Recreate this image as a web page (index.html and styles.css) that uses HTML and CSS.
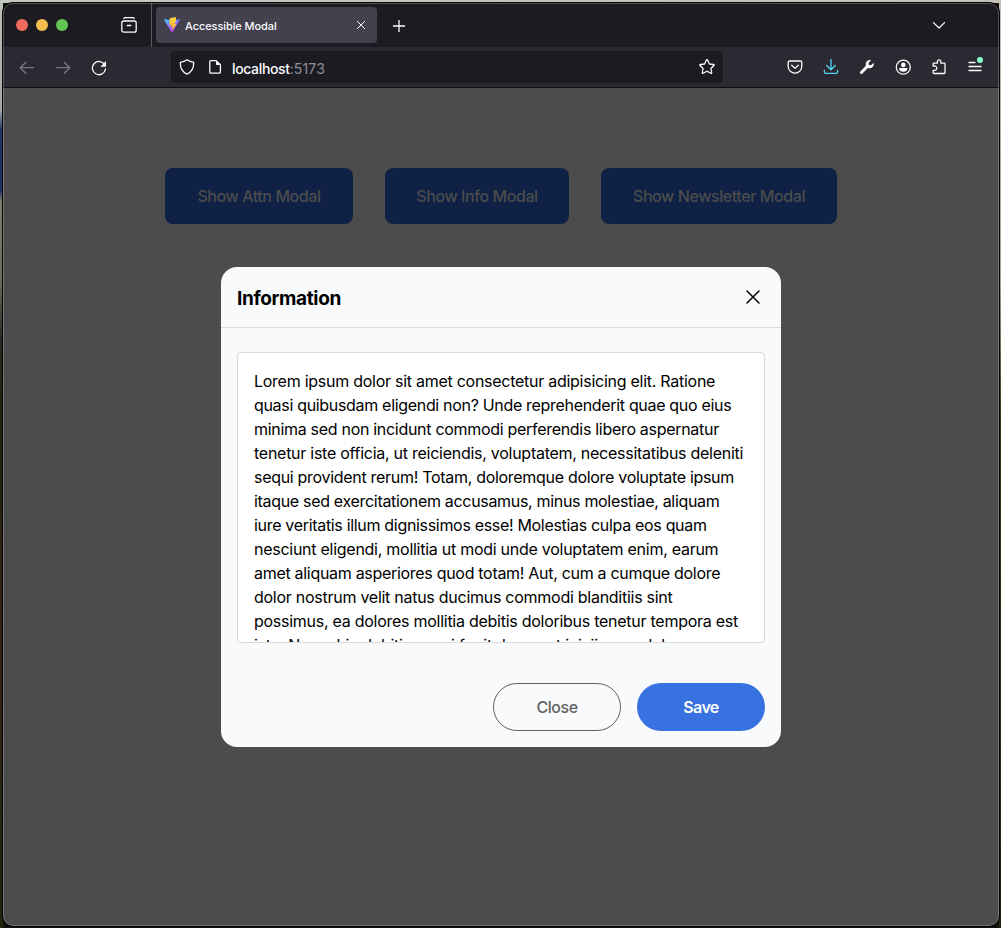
FILE: index.html
```html
<!DOCTYPE html>
<html lang="en">
<head>
<meta charset="utf-8">
<title>Accessible Modal</title>
<link rel="stylesheet" href="styles.css">
</head>
<body>
<div class="window">
  <header class="tabbar">
    <div class="lights"><i class="light red"></i><i class="light yellow"></i><i class="light green"></i></div>
    <svg class="icon view-icon" viewBox="0 0 16 16"><path d="M2.8 1.4Q3.2.7 4.2.7h7.6q1 0 1.4.7"/><rect x=".8" y="4" width="14.4" height="11.2" rx="2"/><path d="M6.2 8.5h3.6"/></svg>
    <div class="tab">
      <svg class="vite" viewBox="0 0 16 16"><defs><linearGradient id="v" x1="0" y1="0" x2=".6" y2="1"><stop stop-color="#41d1ff"/><stop offset=".9" stop-color="#bd34fe"/></linearGradient><linearGradient id="b" x1="0" y1="0" x2="0" y2="1"><stop stop-color="#ffd84a"/><stop offset="1" stop-color="#ffa51f"/></linearGradient></defs><path fill="url(#v)" d="M.5 2.2 8 3.4l7.6-1.2q.5 0 .2.5L8.4 15.5q-.4.5-.8 0L.1 2.7q-.3-.5.4-.5z"/><path fill="url(#b)" d="M11.8 0 5.800 1.200l-.6 6.700 2.400-.5-.5 3 1.700-.4-.8 4.200 4.600-7.400-2.200.3 1.600-3z"/></svg>
      <span class="tab-title">Accessible Modal</span>
      <svg class="icon tab-close" viewBox="0 0 8 8"><path d="m.4.4 7.2 7.2m0-7.2L.4 7.6"/></svg>
    </div>
    <svg class="icon plus" viewBox="0 0 12 12"><path d="M6 .2v11.6M.2 6h11.6"/></svg>
    <svg class="icon chevron" viewBox="0 0 12 7"><path d="m.4.6 5.6 5.4L11.6.6"/></svg>
  </header>
  <nav class="toolbar">
    <div class="history">
      <svg class="icon muted" viewBox="0 0 16 16"><path d="M14.500 7.700H1.200M6.800 2.200 1.200 7.700l5.600 5.500"/></svg>
      <svg class="icon muted" viewBox="0 0 16 16"><path d="M1.500 7.700h13.300M9.200 2.200l5.600 5.500-5.600 5.500"/></svg>
      <svg class="icon" viewBox="0 0 16 16"><path d="M13.800 5A6.600 6.600 0 1 0 14.500 9"/><path class="solid" d="M15 1v5.200q0 .5-.5.500H9.400z"/></svg>
    </div>
    <div class="address">
      <svg class="icon" viewBox="0 0 16 16"><path d="M8 .8C6.200 2.200 4 3 1.300 3.300c-.2 5.200 1.300 9.500 6.700 11.900 5.400-2.400 6.900-6.700 6.700-11.900C12 3 9.800 2.200 8 .8z"/></svg>
      <svg class="icon page-icon" viewBox="0 0 16 16"><path d="M3.800 1.600h5.400l4.200 4.200v7.400q0 1-1 1H3.800q-1 0-1-1V2.600q0-1 1-1z"/><path class="solid" d="M9 1.600v3.600q0 .8.8.8h3.600z"/></svg>
      <span class="url">localhost<span class="port">:5173</span></span>
      <svg class="icon star" viewBox="0 0 16 16"><path d="M7.400 1.100q.6-1 1.200 0l1.800 3.900 4.100.5q1.100.2.4 1l-3 3 .8 4.100q.1 1.100-.9.7L8 12.200l-3.800 2.100q-1 .4-.9-.7L4.100 9.500l-3-3q-.7-.8.4-1L5.600 5z"/></svg>
    </div>
    <div class="actions">
      <svg class="icon" viewBox="0 0 16 16"><path d="M2.800 2h10.400q1.600 0 1.600 1.600v3.700a6.800 6.800 0 0 1-13.600 0V3.600Q1.200 2 2.800 2z"/><path d="M4.700 6.300 8 9.400l3.300-3.100"/></svg>
      <svg class="icon download" viewBox="0 0 16 16"><path d="M8 .4v10M3.700 6.500 8 10.800l4.300-4.300M1.400 11.500v1.600q0 1.200 1.200 1.200h10.800q1.200 0 1.200-1.200v-1.600"/></svg>
      <svg class="icon" viewBox="0 0 16 16"><path class="solid" d="M14.700 3.700 12 6.300 9.800 5.900 9.500 4l2.700-2.800A4.300 4.300 0 0 0 6.800 6.700L1.200 12.700q-.8 1 .1 1.900t1.900.1l5.700-5.800a4.300 4.300 0 0 0 5.800-5.200z"/></svg>
      <svg class="icon" viewBox="0 0 16 16"><circle cx="8.300" cy="8.200" r="7"/><circle class="solid" cx="8.300" cy="5.900" r="2.300"/><path class="solid" d="M4.100 9.100h8.400q.1 3.700-4.200 3.700t-4.200-3.700z"/></svg>
      <svg class="icon" viewBox="0 0 16 16"><path d="M2.200 7V5q0-.8.8-.8h3.400V2.600a1.700 1.700 0 0 1 3.400 0v1.600h3.400q.8 0 .8.8v8.700q0 .8-.8.8H3q-.8 0-.8-.8v-2.300h1.900q1.700-.3 1.700-2.100T4.100 7z"/></svg>
      <span class="menu"><svg class="icon" viewBox="0 0 16 16"><path d="M2 3.500h6M2 7.500h12M2 11.500h12"/></svg><i class="badge"></i></span>
    </div>
  </nav>
  <main class="page">
    <div class="triggers">
      <button class="trigger attn">Show Attn Modal</button>
      <button class="trigger info">Show Info Modal</button>
      <button class="trigger news">Show Newsletter Modal</button>
    </div>
    <section class="modal" role="dialog" aria-labelledby="title">
      <div class="modal-head">
        <h2 id="title" class="modal-title">Information</h2>
        <svg class="icon modal-close" viewBox="0 0 14 14"><path d="m1 1 12 12M13 1 1 13"/></svg>
      </div>
      <div class="modal-body">
        <p class="copy">Lorem ipsum dolor sit amet consectetur adipisicing elit. Ratione<br><span class="tight">quasi quibusdam eligendi non? Unde reprehenderit quae quo eius</span><br><span class="snug">minima sed non incidunt commodi perferendis libero aspernatur</span><br>tenetur iste officia, ut reiciendis, voluptatem, necessitatibus deleniti<br><span class="snug">sequi provident rerum! Totam, doloremque dolore voluptate ipsum</span><br><span class="tight">itaque sed exercitationem accusamus, minus molestiae, aliquam</span><br><span class="tight">iure veritatis illum dignissimos esse! Molestias culpa eos quam</span><br>nesciunt eligendi, mollitia ut modi unde voluptatem enim, earum<br><span class="snug">amet aliquam asperiores quod totam! Aut, cum a cumque dolore</span><br>dolor nostrum velit natus ducimus commodi blanditiis sint<br>possimus, ea dolores mollitia debitis doloribus tenetur tempora est<br>iste. Nemo hic debitis sequi fugit deserunt iniciis quo dolor</p>
      </div>
      <div class="modal-foot"><button class="pill outline">Close</button><button class="pill filled">Save</button></div>
    </section>
  </main>
</div>
</body>
</html>
```
FILE: styles.css
```css
* { box-sizing: border-box; }
body {
  margin: 0;
  height: 928px;
  padding: 3px 2px 2px 3px;
  overflow: hidden;
  font-family: Inter, "Liberation Sans", sans-serif;
  background:
    linear-gradient(90deg, #c1cac2, #c6c1b7) top / 100% 3px no-repeat,
    linear-gradient(#bbc1b9 0, #a6a8a5 110px, #1d3467 130px, #1c3161 190px, #827b70 202px, #6f695e 280px, #25291f 340px, #22240f 420px, #33220f 650px, #20270e 928px) left / 3px 100% no-repeat,
    linear-gradient(#c6beb2, #aaa192 280px, #30351b 420px, #242616 928px) right / 2px 100% no-repeat,
    #11120c;
}
.window {
  position: relative;
  display: flex;
  flex-direction: column;
  height: 923px;
  border-radius: 10px;
  overflow: hidden;
  background: #4c4c4c;
  box-shadow: 0 0 0 1px #050505;
}
.window::after {
  content: "";
  position: absolute;
  inset: 0;
  border: 1px solid rgba(255, 255, 255, .24);
  border-radius: 10px;
  pointer-events: none;
}
.icon {
  display: block;
  flex: none;
  width: 16px;
  height: 16px;
  fill: none;
  stroke: #fbfbfe;
  stroke-width: 1.3;
  stroke-linecap: round;
  stroke-linejoin: round;
}
.solid { fill: #fbfbfe; stroke: none; }
.tabbar {
  display: flex;
  align-items: center;
  height: 44px;
  flex: none;
  background: #1c1b22;
}
.lights { display: flex; gap: 8px; padding: 0 53px 0 13px; }
.light { width: 12px; height: 12px; border-radius: 50%; }
.red { background: #ed6a5e; }
.yellow { background: #f5bf4f; }
.green { background: #61c454; }
.tab {
  position: relative;
  display: flex;
  align-items: center;
  width: 221px;
  height: 36px;
  margin-left: 19px;
  padding: 0 12px 0 8px;
  border-radius: 4px;
  background: #42414d;
}
.tab::before {
  content: "";
  position: absolute;
  left: -5px;
  top: -4px;
  width: 1px;
  height: 44px;
  background: #5b5b62;
}
.vite { width: 16px; height: 16px; margin-right: 5px; }
.tab-title { flex: 1; padding-top: 2px; color: #fbfbfe; font-size: 11px; font-weight: 500; letter-spacing: -.08px; white-space: nowrap; }
.tab-close { width: 8px; height: 8px; stroke-width: 1; }
.plus { width: 12px; height: 12px; margin: 1px 0 0 15.5px; stroke-width: 1.3; }
.chevron { width: 12px; height: 7px; margin: 0 54px 0 auto; stroke-width: 1.3; }
.toolbar {
  display: flex;
  align-items: center;
  height: 41px;
  flex: none;
  padding: 0 16px;
  border-bottom: 1px solid #101014;
  background: #2b2a33;
}
.history { display: flex; gap: 20px; width: 152px; padding-top: 2px; }
.muted { stroke: #7a7982; }
.address {
  display: flex;
  align-items: center;
  width: 552px;
  height: 32px;
  padding: 0 8px;
  border-radius: 4px;
  background: #1c1b22;
}
.page-icon { margin: 0 9px 0 12px; }
.url { flex: 1; padding-top: 2px; color: #fbfbfe; font-size: 14px; font-weight: 500; letter-spacing: -.36px; }
.port { color: #8f8e96; font-weight: 400; letter-spacing: .15px; }
.actions { display: flex; gap: 20px; margin-left: 64px; }
.menu { position: relative; }
.badge {
  position: absolute;
  left: 10px;
  top: -2px;
  width: 6px;
  height: 6px;
  border-radius: 50%;
  background: #88ffd1;
}
.download { stroke: #54d3f2; }
.page { display: flex; flex: 1; flex-direction: column; align-items: center; }
.triggers { display: flex; gap: 32px; padding-top: 80px; }
.trigger {
  height: 56px;
  border: 0;
  border-radius: 8px;
  padding: 0;
  background: #0f2144;
  color: #4c4c4c;
  font: 500 16px Inter, sans-serif;
  letter-spacing: -.42px;
}
.attn { width: 188px; }
.info { width: 184px; }
.news { width: 236px; }
.modal {
  display: flex;
  flex-direction: column;
  width: 560px;
  height: 480px;
  margin-top: 43px;
  border-radius: 16px;
  background: #f9fafc;
  color: #000;
}
.modal-head {
  display: flex;
  align-items: center;
  justify-content: space-between;
  height: 61px;
  padding: 2px 21px 0 16px;
  border-bottom: 1px solid #d9dadc;
}
.modal-title { margin: 0; font-size: 19px; font-weight: 700; letter-spacing: -.35px; }
.modal-close { width: 14px; height: 14px; margin-bottom: 2px; stroke: #000; stroke-width: 1.5; }
.modal-body {
  height: 291px;
  margin: 24px 16px 0;
  padding: 16px;
  overflow: hidden;
  border: 1px solid #d9dadc;
  border-radius: 4px;
  background: #fff;
}
.copy { margin: 0; font-size: 16px; line-height: 24px; letter-spacing: -.265px; white-space: nowrap; }
.snug { letter-spacing: -.3px; }
.tight { letter-spacing: -.317px; }
.modal-foot { display: flex; justify-content: flex-end; gap: 16px; padding: 40px 16px 16px; }
.pill {
  width: 128px;
  height: 48px;
  border: 0;
  border-radius: 24px;
  font: 500 16px Inter, sans-serif;
  letter-spacing: -.6px;
}
.outline { border: 1px solid #626262; background: transparent; color: #626262; letter-spacing: -.45px; }
.filled { background: #3872e0; color: #fff; font-weight: 600; }
```
